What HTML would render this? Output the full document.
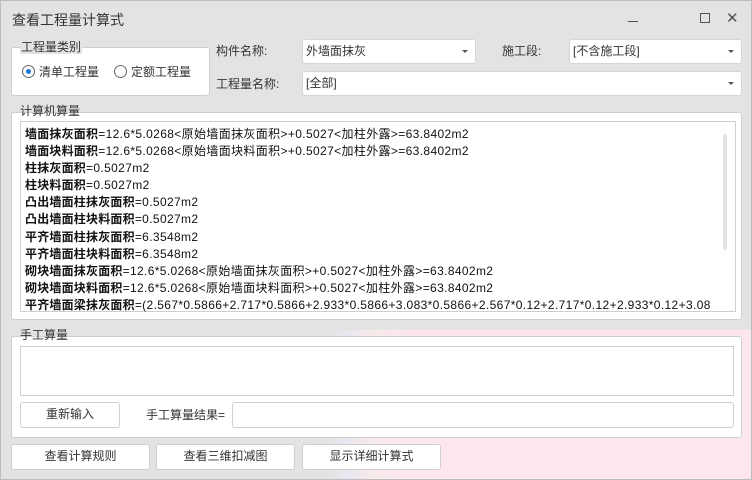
<!DOCTYPE html>
<html><head><meta charset="utf-8"><style>
*{box-sizing:border-box;margin:0;padding:0}
body{width:752px;height:480px;overflow:hidden;position:relative;font-family:"Liberation Sans","Noto Sans CJK SC",sans-serif;font-size:12px;color:#222;
background:linear-gradient(90deg,#e3e3e3 0,#e3e3e3 330px,#e8e6f0 345px,#f8eaea 375px,#fde6f0 410px,#fde6f0 100%);}
.top{position:absolute;left:0;top:0;width:752px;height:330px;background:#e3e3e3;}
.a{position:absolute}
.title{left:12px;top:10px;font-size:14px;color:#333}
.box{position:absolute;background:#fff;border:1px solid #cfcfcf;border-radius:3px}
.lbl{position:absolute;font-size:12px;color:#333;line-height:14px}
.combo{position:absolute;background:#fff;border:1px solid #d6d6d6;border-radius:3px;padding-left:3px;line-height:22px;font-size:12px;color:#333}
.combo:after{content:"";position:absolute;right:7px;top:10px;border-left:3px solid transparent;border-right:3px solid transparent;border-top:3px solid #555}
.btn{position:absolute;background:#fff;border:1px solid #cfcfcf;border-radius:3px;text-align:center;line-height:23px;font-size:12px;color:#333}
.lines{position:absolute;left:25px;top:126px;line-height:17.1px;font-size:12px;white-space:nowrap;color:#111;letter-spacing:0.36px}
.lines b{font-weight:bold;letter-spacing:0.2px}
.radio{display:inline-block;width:13px;height:13px;border:1px solid #666;border-radius:50%;vertical-align:-2px;margin-right:4px;position:relative;background:#fff}
.radio.on:after{content:"";position:absolute;left:3px;top:3px;width:5px;height:5px;border-radius:50%;background:#1e78d8}
</style></head><body>
<div class="top"></div>
<div class="a title">查看工程量计算式</div>
<div class="a" style="left:628px;width:10px;height:1px;background:#555;top:21px"></div>
<div class="a" style="left:700px;top:13px;width:10px;height:10px;border:1px solid #555"></div>
<div class="a" style="left:726px;top:9px;font-size:15px;color:#555">✕</div>

<div class="box" style="left:11px;top:47px;width:199px;height:49px"></div>
<div class="lbl" style="left:20px;top:40px;background:#e3e3e3;padding:0 1px">工程量类别</div>
<div class="lbl" style="left:22px;top:65px"><span class="radio on"></span>清单工程量</div>
<div class="lbl" style="left:114px;top:65px"><span class="radio"></span>定额工程量</div>

<div class="lbl" style="left:216px;top:44px">构件名称:</div>
<div class="combo" style="left:302px;top:39px;width:174px;height:25px">外墙面抹灰</div>
<div class="lbl" style="left:502px;top:44px">施工段:</div>
<div class="combo" style="left:569px;top:39px;width:173px;height:25px">[不含施工段]</div>
<div class="lbl" style="left:216px;top:77px">工程量名称:</div>
<div class="combo" style="left:302px;top:71px;width:440px;height:25px">[全部]</div>

<div class="box" style="left:11px;top:112px;width:731px;height:208px"></div>
<div class="lbl" style="left:20px;top:104px">计算机算量</div>
<div class="a" style="left:20px;top:121px;width:716px;height:191px;border:1px solid #cfcfcf;background:#fff;overflow:hidden"></div>
<div class="a" style="left:723px;top:134px;width:4px;height:116px;background:#e4e4e4;border-radius:2px"></div>
<div class="a" style="left:21px;top:122px;width:693px;height:190px;overflow:hidden">
<div class="lines" style="left:4px;top:4px">
<b>墙面抹灰面积</b>=12.6*5.0268&lt;原始墙面抹灰面积&gt;+0.5027&lt;加柱外露&gt;=63.8402m2<br>
<b>墙面块料面积</b>=12.6*5.0268&lt;原始墙面块料面积&gt;+0.5027&lt;加柱外露&gt;=63.8402m2<br>
<b>柱抹灰面积</b>=0.5027m2<br>
<b>柱块料面积</b>=0.5027m2<br>
<b>凸出墙面柱抹灰面积</b>=0.5027m2<br>
<b>凸出墙面柱块料面积</b>=0.5027m2<br>
<b>平齐墙面柱抹灰面积</b>=6.3548m2<br>
<b>平齐墙面柱块料面积</b>=6.3548m2<br>
<b>砌块墙面抹灰面积</b>=12.6*5.0268&lt;原始墙面抹灰面积&gt;+0.5027&lt;加柱外露&gt;=63.8402m2<br>
<b>砌块墙面块料面积</b>=12.6*5.0268&lt;原始墙面块料面积&gt;+0.5027&lt;加柱外露&gt;=63.8402m2<br>
<b>平齐墙面梁抹灰面积</b>=(2.567*0.5866+2.717*0.5866+2.933*0.5866+3.083*0.5866+2.567*0.12+2.717*0.12+2.933*0.12+3.08
</div></div>

<div class="box" style="left:11px;top:336px;width:731px;height:102px"></div>
<div class="lbl" style="left:20px;top:328px">手工算量</div>
<div class="a" style="left:20px;top:346px;width:714px;height:50px;border:1px solid #cfcfcf;background:#fff"></div>
<div class="btn" style="left:20px;top:402px;width:100px;height:26px">重新输入</div>
<div class="lbl" style="left:146px;top:408px">手工算量结果=</div>
<div class="a" style="left:232px;top:402px;width:502px;height:26px;border:1px solid #cfcfcf;border-radius:3px;background:#fff"></div>

<div class="btn" style="left:11px;top:444px;width:139px;height:26px">查看计算规则</div>
<div class="btn" style="left:156px;top:444px;width:139px;height:26px">查看三维扣减图</div>
<div class="btn" style="left:302px;top:444px;width:139px;height:26px">显示详细计算式</div>
<div class="a" style="left:0;top:0;width:752px;height:480px;border:1px solid #bdbdbd"></div>
</body></html>
